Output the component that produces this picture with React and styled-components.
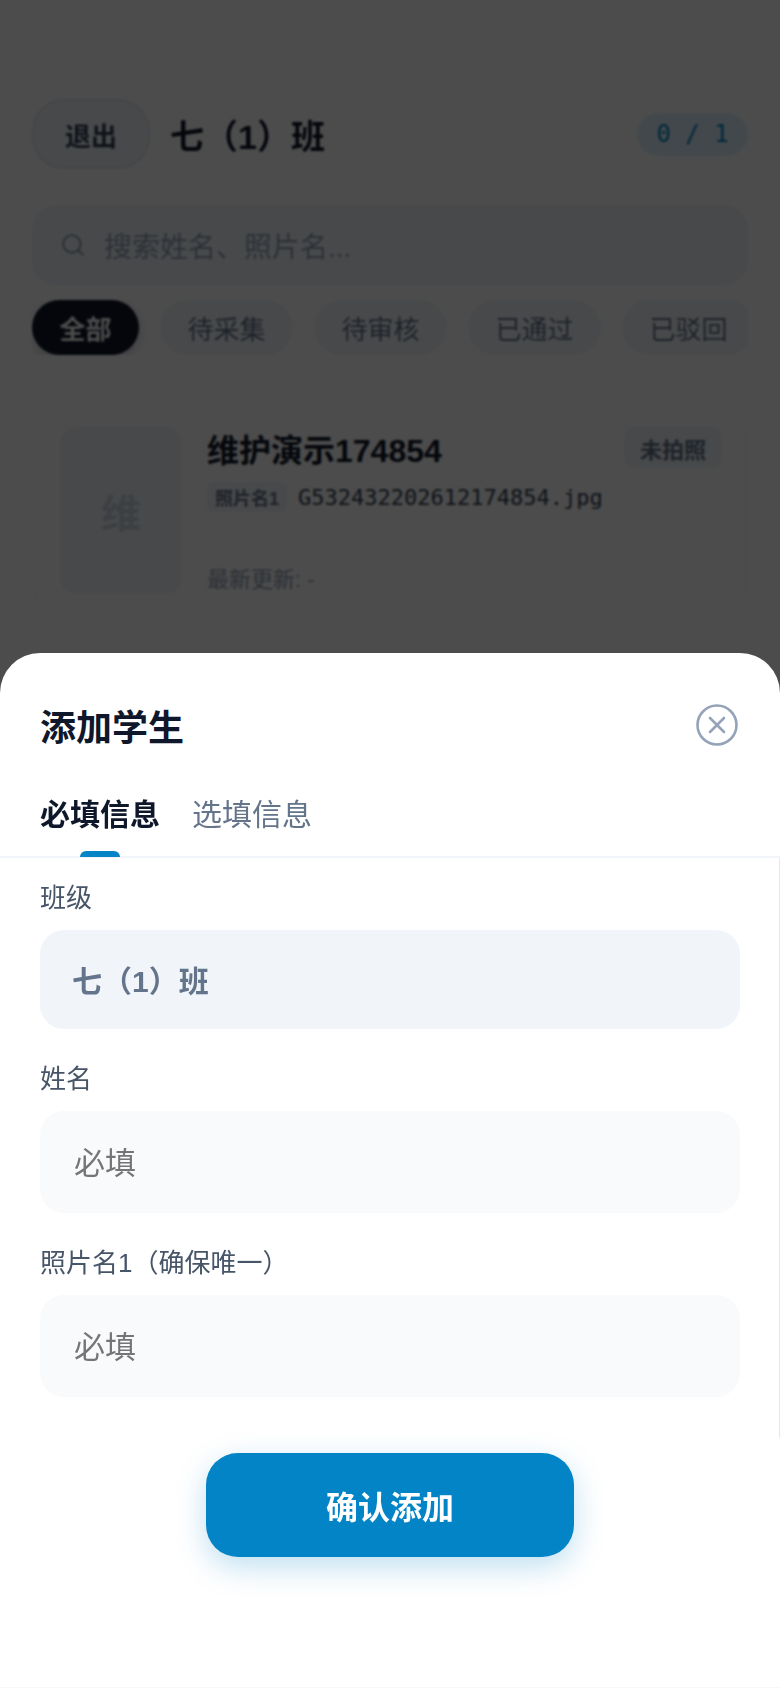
import React from "react";
import styled, { createGlobalStyle } from "styled-components";

const sans = `"Liberation Sans", "Noto Sans CJK SC", sans-serif`;
const mono = `"DejaVu Sans Mono", "Noto Sans CJK SC", monospace`;

const GlobalStyle = createGlobalStyle`
  html, body {
    margin: 0;
    padding: 0;
    background: #ffffff;
  }
  * {
    box-sizing: border-box;
  }
`;

const Screen = styled.div`
  position: relative;
  width: 780px;
  height: 1688px;
  overflow: hidden;
  font-family: ${sans};
`;

const Page = styled.div`
  padding: 99px 32px 0;
  display: flex;
  flex-direction: column;
  filter: blur(0.8px);
`;

const Header = styled.header`
  display: flex;
  align-items: center;
  height: 70px;
`;

const ExitButton = styled.button`
  width: 118px;
  height: 70px;
  border: 2px solid #e2e8f0;
  border-radius: 32px;
  background: #f1f5f9;
  color: #334155;
  font-family: inherit;
  font-size: 26px;
  font-weight: 700;
`;

const ClassTitle = styled.h1`
  margin: 0 0 0 20px;
  flex: 1;
  font-size: 34px;
  font-weight: 700;
  color: #0f172a;
`;

const Counter = styled.div`
  width: 111px;
  height: 43px;
  border-radius: 22px;
  background: #e0f2fe;
  color: #0284c7;
  font-family: ${mono};
  font-size: 24px;
  font-weight: 500;
  display: flex;
  align-items: center;
  justify-content: center;
`;

const SearchBar = styled.div`
  margin-top: 36px;
  height: 80px;
  border-radius: 24px;
  background: #f1f5f9;
  display: flex;
  align-items: center;
  padding-left: 28px;
  gap: 18px;
  color: #94a3b8;
  font-size: 28px;
  svg {
    display: block;
    flex: none;
  }
`;

const Filters = styled.div`
  margin-top: 15px;
  display: flex;
  gap: 21px;
  overflow: hidden;
`;

const FilterChip = styled.div`
  flex: none;
  height: 55px;
  padding: 0 27.5px;
  border-radius: 28px;
  display: flex;
  align-items: center;
  font-size: 26px;
  font-weight: ${(p) => (p.$active ? 700 : 400)};
  color: ${(p) => (p.$active ? "#ffffff" : "#64748b")};
  background: ${(p) => (p.$active ? "#0f172a" : "#f1f5f9")};
  box-shadow: ${(p) => (p.$active ? "0 4px 12px rgba(15,23,42,.2)" : "none")};
`;

const StudentCard = styled.article`
  margin: 48px 2px 0;
  height: 217px;
  padding: 22px 22px 22px 24px;
  border-radius: 32px;
  background: #ffffff;
  border: 2px solid #f8fafc;
  display: flex;
  gap: 25px;
`;

const Avatar = styled.div`
  flex: none;
  width: 122px;
  height: 167px;
  border-radius: 16px;
  background: #f1f5f9;
  color: #cbd5e1;
  font-size: 40px;
  font-weight: 700;
  display: flex;
  align-items: center;
  justify-content: center;
`;

const CardBody = styled.div`
  flex: 1;
  display: flex;
  flex-direction: column;
`;

const NameRow = styled.div`
  display: flex;
  justify-content: space-between;
  align-items: flex-start;
  height: 55px;
`;

const StudentName = styled.div`
  font-size: 32px;
  font-weight: 700;
  line-height: 48px;
  color: #0f172a;
`;

const StatusBadge = styled.div`
  height: 41px;
  padding: 0 16px;
  border-radius: 10px;
  background: #f1f5f9;
  color: #64748b;
  font-size: 22px;
  font-weight: 700;
  display: flex;
  align-items: center;
`;

const PhotoRow = styled.div`
  display: flex;
  align-items: center;
  gap: 11px;
`;

const PhotoTag = styled.span`
  height: 30px;
  padding: 0 8px;
  border-radius: 6px;
  background: #f1f5f9;
  color: #64748b;
  font-size: 18px;
  font-weight: 700;
  display: flex;
  align-items: center;
`;

const FileName = styled.span`
  font-family: ${mono};
  font-size: 22px;
  color: #334155;
`;

const UpdatedAt = styled.div`
  margin-top: auto;
  font-size: 22px;
  line-height: 30px;
  color: #94a3b8;
  transform: translateY(-1px);
`;

const Backdrop = styled.div`
  position: absolute;
  inset: 0;
  background: rgba(0, 0, 0, 0.7);
`;

const Sheet = styled.section`
  position: absolute;
  left: 0;
  right: 0;
  top: 653px;
  bottom: 0;
  background: #ffffff;
  border-radius: 40px 40px 0 0;
  border-bottom: 1px solid #f8f8f8;
  display: flex;
  flex-direction: column;
`;

const SheetHeader = styled.div`
  height: 142px;
  padding: 54px 40px 0;
  display: flex;
  justify-content: space-between;
  align-items: flex-start;
`;

const SheetTitle = styled.h2`
  margin: 0;
  font-size: 36px;
  font-weight: 700;
  line-height: 44px;
  color: #0f172a;
`;

const CloseButton = styled.button`
  margin: -4px 1px 0 0;
  padding: 0;
  border: 0;
  background: none;
  color: #94a3b8;
  svg {
    display: block;
  }
`;

const Tabs = styled.div`
  height: 63px;
  padding: 0 40px;
  display: flex;
  gap: 32px;
  border-bottom: 2px solid #f1f5f9;
`;

const Tab = styled.div`
  position: relative;
  height: 61px;
  font-size: 30px;
  line-height: 40px;
  font-weight: ${(p) => (p.$active ? 700 : 400)};
  color: ${(p) => (p.$active ? "#0f172a" : "#64748b")};

  &::after {
    content: "";
    display: ${(p) => (p.$active ? "block" : "none")};
    position: absolute;
    left: 40px;
    bottom: -1px;
    width: 40px;
    height: 6px;
    border-radius: 8px 8px 0 0;
    background: #0284c7;
  }
`;

const FormBody = styled.div`
  height: 580px;
  padding: 23px 39px 0 40px;
  border-right: 1px solid #e2e8f0;
  display: flex;
  flex-direction: column;
`;

const Field = styled.div`
  display: flex;
  flex-direction: column;
  margin-bottom: 33px;
`;

const Label = styled.label`
  font-size: 26px;
  line-height: 34px;
  color: #475569;
  margin-bottom: 15px;
`;

const ClassValue = styled.div`
  height: 99px;
  border-radius: 24px;
  padding: 0 32px 2px;
  background: #f1f5f9;
  color: #64748b;
  font-size: 30px;
  font-weight: 700;
  display: flex;
  align-items: center;
`;

const TextInput = styled.input`
  height: 102px;
  border: 0;
  border-radius: 24px;
  padding: 4px 34px 0;
  background: #f8fafc;
  font-family: inherit;
  font-size: 31px;
  color: #0f172a;
  outline: none;
`;

const Footer = styled.div`
  flex: 1;
  padding-top: 15px;
  display: flex;
  justify-content: center;
  align-items: flex-start;
`;

const SubmitButton = styled.button`
  width: 368px;
  height: 104px;
  border: 0;
  border-radius: 32px;
  background: #0284c7;
  color: #ffffff;
  font-family: inherit;
  font-size: 32px;
  font-weight: 700;
  box-shadow: 0 10px 30px rgba(2, 132, 199, 0.25);
`;

const filters = ["全部", "待采集", "待审核", "已通过", "已驳回"];

export default function App() {
  return (
    <Screen>
      <GlobalStyle />
      <Page>
        <Header>
          <ExitButton>退出</ExitButton>
          <ClassTitle>七（1）班</ClassTitle>
          <Counter>0 / 1</Counter>
        </Header>
        <SearchBar>
          <svg width="26" height="26" viewBox="0 0 24 24" fill="none" stroke="currentColor" strokeWidth="2" strokeLinecap="round">
            <circle cx="11" cy="11" r="8" />
            <path d="m21 21-4.3-4.3" />
          </svg>
          搜索姓名、照片名...
        </SearchBar>
        <Filters>
          {filters.map((f, i) => (
            <FilterChip key={f} $active={i === 0}>
              {f}
            </FilterChip>
          ))}
        </Filters>
        <StudentCard>
          <Avatar>维</Avatar>
          <CardBody>
            <NameRow>
              <StudentName>维护演示174854</StudentName>
              <StatusBadge>未拍照</StatusBadge>
            </NameRow>
            <PhotoRow>
              <PhotoTag>照片名1</PhotoTag>
              <FileName>G532432202612174854.jpg</FileName>
            </PhotoRow>
            <UpdatedAt>最新更新: -</UpdatedAt>
          </CardBody>
        </StudentCard>
      </Page>
      <Backdrop />
      <Sheet>
        <SheetHeader>
          <SheetTitle>添加学生</SheetTitle>
          <CloseButton>
            <svg width="44" height="44" viewBox="0 0 44 44" fill="none" stroke="currentColor" strokeWidth="2.6" strokeLinecap="round">
              <circle cx="22" cy="22" r="19.5" />
              <path d="M15 15l14 14M29 15L15 29" />
            </svg>
          </CloseButton>
        </SheetHeader>
        <Tabs>
          <Tab $active>必填信息</Tab>
          <Tab>选填信息</Tab>
        </Tabs>
        <FormBody>
          <Field>
            <Label>班级</Label>
            <ClassValue>七（1）班</ClassValue>
          </Field>
          <Field>
            <Label>姓名</Label>
            <TextInput placeholder="必填" />
          </Field>
          <Field>
            <Label>照片名1（确保唯一）</Label>
            <TextInput placeholder="必填" />
          </Field>
        </FormBody>
        <Footer>
          <SubmitButton>确认添加</SubmitButton>
        </Footer>
      </Sheet>
    </Screen>
  );
}
